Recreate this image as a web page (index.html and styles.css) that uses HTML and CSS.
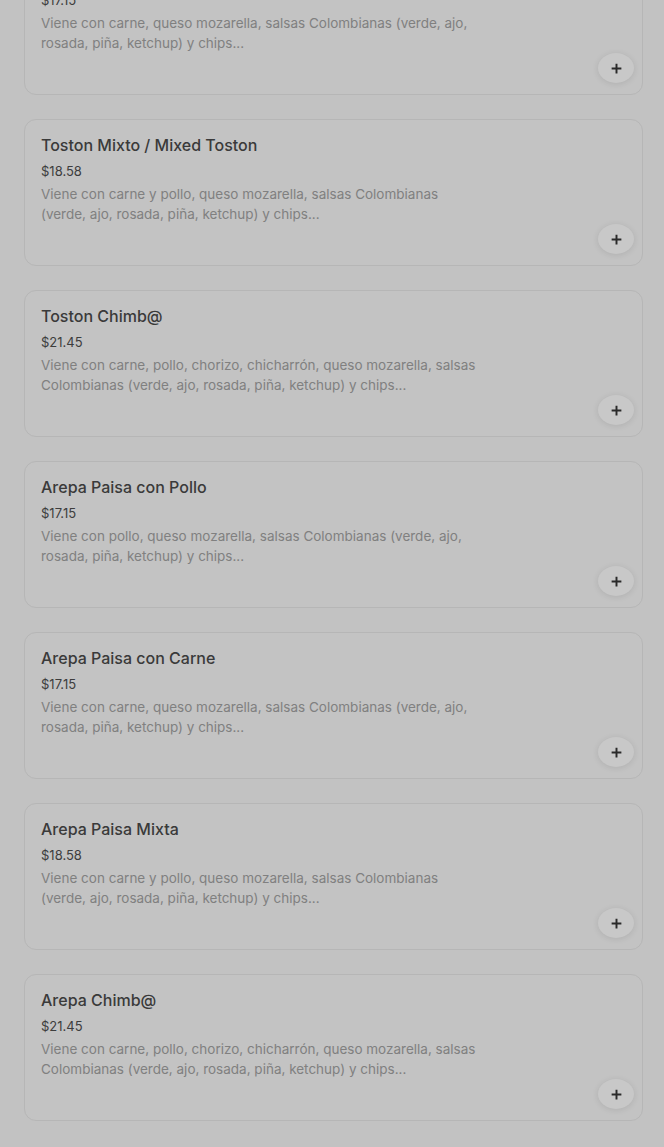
FILE: index.html
```html
<!DOCTYPE html>
<html lang="es">
  <head>
    <meta charset="UTF-8">
    <meta name="viewport" content="width=device-width, initial-scale=1.0">
    <link rel="stylesheet" href="styles.css">
    <title>Menú</title>
  </head>
  <body>
    <div class="menu">
      <div class="item">
        <h3 class="item-name">Toston Paisa con Carne</h3>
        <div class="item-price">$17.15</div>
        <p class="item-desc">Viene con carne, queso mozarella, salsas Colombianas (verde, ajo, rosada, piña, ketchup) y chips...</p>
        <button class="add-button" aria-label="Agregar"><svg viewBox="0 0 16 16" width="13" height="13"><path d="M8 2v12M2 8h12" stroke="currentColor" stroke-width="2.4"/></svg></button>
      </div>

      <div class="item">
        <h3 class="item-name">Toston Mixto / Mixed Toston</h3>
        <div class="item-price">$18.58</div>
        <p class="item-desc">Viene con carne y pollo, queso mozarella, salsas Colombianas (verde, ajo, rosada, piña, ketchup) y chips...</p>
        <button class="add-button" aria-label="Agregar"><svg viewBox="0 0 16 16" width="13" height="13"><path d="M8 2v12M2 8h12" stroke="currentColor" stroke-width="2.4"/></svg></button>
      </div>

      <div class="item">
        <h3 class="item-name">Toston Chimb@</h3>
        <div class="item-price">$21.45</div>
        <p class="item-desc">Viene con carne, pollo, chorizo, chicharrón, queso mozarella, salsas Colombianas (verde, ajo, rosada, piña, ketchup) y chips...</p>
        <button class="add-button" aria-label="Agregar"><svg viewBox="0 0 16 16" width="13" height="13"><path d="M8 2v12M2 8h12" stroke="currentColor" stroke-width="2.4"/></svg></button>
      </div>

      <div class="item">
        <h3 class="item-name">Arepa Paisa con Pollo</h3>
        <div class="item-price">$17.15</div>
        <p class="item-desc">Viene con pollo, queso mozarella, salsas Colombianas (verde, ajo, rosada, piña, ketchup) y chips...</p>
        <button class="add-button" aria-label="Agregar"><svg viewBox="0 0 16 16" width="13" height="13"><path d="M8 2v12M2 8h12" stroke="currentColor" stroke-width="2.4"/></svg></button>
      </div>

      <div class="item">
        <h3 class="item-name">Arepa Paisa con Carne</h3>
        <div class="item-price">$17.15</div>
        <p class="item-desc">Viene con carne, queso mozarella, salsas Colombianas (verde, ajo, rosada, piña, ketchup) y chips...</p>
        <button class="add-button" aria-label="Agregar"><svg viewBox="0 0 16 16" width="13" height="13"><path d="M8 2v12M2 8h12" stroke="currentColor" stroke-width="2.4"/></svg></button>
      </div>

      <div class="item">
        <h3 class="item-name">Arepa Paisa Mixta</h3>
        <div class="item-price">$18.58</div>
        <p class="item-desc">Viene con carne y pollo, queso mozarella, salsas Colombianas (verde, ajo, rosada, piña, ketchup) y chips...</p>
        <button class="add-button" aria-label="Agregar"><svg viewBox="0 0 16 16" width="13" height="13"><path d="M8 2v12M2 8h12" stroke="currentColor" stroke-width="2.4"/></svg></button>
      </div>

      <div class="item">
        <h3 class="item-name">Arepa Chimb@</h3>
        <div class="item-price">$21.45</div>
        <p class="item-desc">Viene con carne, pollo, chorizo, chicharrón, queso mozarella, salsas Colombianas (verde, ajo, rosada, piña, ketchup) y chips...</p>
        <button class="add-button" aria-label="Agregar"><svg viewBox="0 0 16 16" width="13" height="13"><path d="M8 2v12M2 8h12" stroke="currentColor" stroke-width="2.4"/></svg></button>
      </div>
    </div>
  </body>
</html>
```

FILE: styles.css
```css
body {
  margin: 0;
  background-color: #c2c2c2;
  font-family: Inter, "Noto Sans", sans-serif;
  color: #333;
}

.menu {
  display: flex;
  flex-direction: column;
  gap: 24px;
  margin-top: -52px;
  padding: 0 21px 0 24px;
}

.item {
  box-sizing: border-box;
  height: 147px;
  display: flex;
  flex-direction: column;
  padding: 14px 8px 11px 16px;
  border: 1px solid #b6b6b6;
  border-radius: 12px;
  background-color: #c3c3c3;
}

.item-name {
  margin: 0;
  font-size: 16px;
  line-height: 22px;
  font-weight: 500;
  color: #3a3a3a;
}

.item-price {
  margin-top: 6px;
  font-size: 13px;
  line-height: 18px;
  color: #3d3d3d;
}

.item-desc {
  margin: 4px 0 0;
  max-width: 440px;
  font-size: 13.5px;
  line-height: 20px;
  color: #808080;
}

.add-button {
  margin-top: auto;
  align-self: flex-end;
  width: 36px;
  height: 36px;
  display: flex;
  justify-content: center;
  align-items: center;
  padding: 0;
  border: none;
  border-radius: 50%;
  background-color: #c8c8c8;
  color: #2a2a2a;
  box-shadow: 0 1px 6px rgba(0, 0, 0, 0.1);
  cursor: pointer;
}
```
